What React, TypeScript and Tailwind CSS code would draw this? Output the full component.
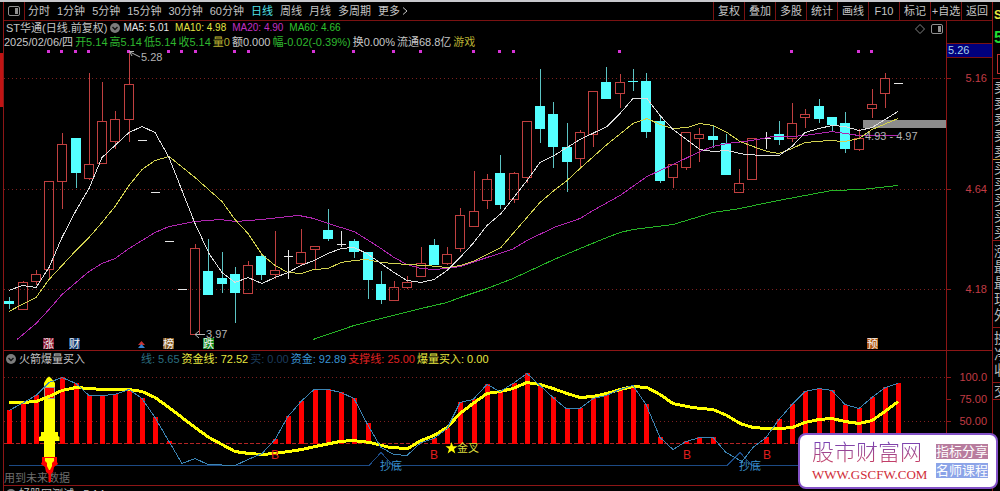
import { useState } from 'react';
import clsx from 'clsx';

type Kind = 'up' | 'down' | 'flat';
type Candle = [high: number, top: number, bottom: number, low: number, kind: Kind];
type Point = [number, number];

const periods = ['分时', '1分钟', '5分钟', '15分钟', '30分钟', '60分钟', '日线', '周线', '月线', '多周期'];
const tools = ['复权', '叠加', '多股', '统计', '画线', 'F10', '标记', '+自选', '返回'];

const averages = [
  { label: 'MA5: 5.01', color: 'text-[#e8e8e8]' },
  { label: 'MA10: 4.98', color: 'text-[#e4e444]' },
  { label: 'MA20: 4.90', color: 'text-[#c22fc2]' },
  { label: 'MA60: 4.66', color: 'text-[#2fc42f]' },
];

const quote = [
  { label: '2025/02/06/四', color: 'text-[#c8c8c8]' },
  { label: '开5.14', color: 'text-[#2fb82f]' },
  { label: '高5.14', color: 'text-[#2fb82f]' },
  { label: '低5.14', color: 'text-[#2fb82f]' },
  { label: '收5.14', color: 'text-[#2fb82f]' },
  { label: '量0', color: 'text-[#b8b032]' },
  { label: '额0.000', color: 'text-[#c8c8c8]' },
  { label: '幅-0.02(-0.39%)', color: 'text-[#2fb82f]' },
  { label: '换0.00%', color: 'text-[#c8c8c8]' },
  { label: '流通68.8亿', color: 'text-[#c8c8c8]' },
  { label: '游戏', color: 'text-[#b8b032]' },
];

const indicators = [
  { label: '线: 5.65', color: 'text-[#2b6f80]' },
  { label: '资金线: 72.52', color: 'text-[#e8e840]' },
  { label: '买: 0.00', color: 'text-[#1c3c5c]' },
  { label: '资金: 92.89', color: 'text-[#3a94d4]' },
  { label: '支撑线: 25.00', color: 'text-[#e02222]' },
  { label: '爆量买入: 0.00', color: 'text-[#e8e840]' },
];

const candles: Candle[] = [
  [297, 301, 304, 309, 'down'], [281, 282, 309, 309, 'up'], [270, 274, 281, 285, 'up'], [181, 181, 269, 278, 'up'],
  [133, 144, 181, 209, 'up'], [138, 138, 173, 188, 'down'], [73, 164, 178, 180, 'up'], [82, 121, 163, 163, 'up'],
  [111, 119, 141, 149, 'up'], [53, 84, 119, 142, 'up'], [140, 140, 140, 140, 'flat'], [192, 192, 192, 192, 'flat'],
  [241, 241, 241, 241, 'flat'], [289, 289, 289, 289, 'flat'], [244, 248, 334, 334, 'up'], [239, 271, 295, 295, 'down'],
  [252, 278, 284, 293, 'down'], [267, 274, 293, 323, 'down'], [261, 265, 293, 293, 'up'], [253, 256, 275, 280, 'down'],
  [231, 270, 274, 279, 'up'], [250, 256, 256, 279, 'flat'], [229, 252, 263, 266, 'up'], [246, 246, 249, 270, 'up'],
  [209, 230, 239, 241, 'down'], [231, 244, 244, 247, 'flat'], [239, 241, 252, 258, 'down'], [252, 252, 280, 299, 'down'],
  [271, 284, 300, 304, 'down'], [281, 287, 300, 300, 'up'], [276, 282, 287, 289, 'up'], [247, 263, 276, 276, 'up'],
  [239, 245, 265, 265, 'down'], [247, 254, 263, 265, 'up'], [208, 215, 248, 252, 'up'], [171, 211, 226, 226, 'up'],
  [174, 179, 200, 209, 'up'], [155, 173, 205, 209, 'down'], [172, 173, 199, 203, 'up'], [121, 121, 177, 183, 'up'],
  [69, 106, 129, 143, 'down'], [102, 114, 147, 168, 'down'], [123, 147, 162, 192, 'down'], [130, 132, 158, 167, 'up'],
  [91, 91, 134, 147, 'up'], [67, 82, 99, 99, 'down'], [74, 82, 93, 108, 'up'], [69, 81, 82, 91, 'down'],
  [73, 81, 132, 138, 'down'], [115, 121, 181, 183, 'down'], [164, 164, 177, 188, 'up'], [132, 132, 167, 170, 'up'],
  [128, 134, 138, 162, 'up'], [125, 136, 140, 148, 'down'], [134, 143, 175, 175, 'down'], [169, 183, 192, 193, 'up'],
  [138, 138, 179, 179, 'up'], [132, 138, 138, 149, 'flat'], [121, 134, 140, 145, 'down'], [103, 123, 138, 142, 'up'],
  [109, 114, 117, 128, 'up'], [99, 106, 119, 123, 'down'], [117, 117, 125, 131, 'down'], [112, 123, 149, 153, 'down'],
  [129, 138, 149, 151, 'up'], [89, 104, 108, 118, 'up'], [73, 78, 93, 108, 'up'], [83, 83, 83, 83, 'flat'],
];

const ma5: Point[] = [
  [9, 290], [22, 285], [36, 287], [49, 267], [62, 237], [76, 210], [89, 188], [102, 157], [115, 145], [129, 132],
  [142, 126], [155, 132], [169, 157], [195, 223], [209, 253], [222, 272], [235, 282], [248, 277], [262, 283], [275, 277],
  [288, 272], [301, 265], [314, 260], [328, 253], [341, 248], [354, 247], [367, 253], [381, 263], [394, 272], [407, 280],
  [421, 282], [434, 279], [447, 270], [460, 257], [473, 243], [487, 225], [501, 213], [513, 198], [527, 180], [540, 162],
  [554, 155], [580, 139], [607, 126], [620, 113], [633, 98], [647, 98], [660, 115], [673, 129], [700, 149], [713, 151],
  [727, 150], [745, 154], [765, 155], [779, 155], [792, 146], [805, 132], [819, 128], [832, 125], [845, 126], [859, 130],
  [872, 127], [885, 119], [898, 111],
];

const ma10: Point[] = [
  [9, 311], [22, 304], [36, 297], [49, 279], [62, 265], [76, 250], [89, 237], [102, 222], [115, 206], [129, 185],
  [142, 169], [155, 160], [169, 156], [195, 177], [222, 201], [235, 219], [248, 233], [262, 254], [275, 265], [288, 272],
  [301, 273], [314, 269], [328, 268], [341, 262], [354, 260], [367, 259], [381, 262], [407, 264], [427, 265], [447, 267],
  [460, 265], [473, 261], [501, 247], [513, 233], [540, 202], [554, 190], [567, 180], [580, 168], [607, 144], [633, 123],
  [647, 118], [660, 124], [673, 128], [687, 127], [700, 123], [713, 125], [727, 132], [740, 141], [753, 146], [767, 151],
  [779, 153], [792, 148], [805, 142], [829, 140], [845, 141], [859, 138], [872, 129], [898, 118],
];

const ma20: Point[] = [
  [17, 339], [36, 323], [49, 309], [62, 294], [76, 282], [89, 271], [102, 263], [115, 258], [129, 248], [142, 240],
  [155, 232], [169, 226], [195, 221], [220, 219], [236, 221], [262, 219], [288, 216], [299, 215], [314, 218], [328, 223],
  [354, 231], [367, 239], [381, 248], [394, 257], [407, 264], [421, 268], [434, 269], [447, 268], [460, 266], [487, 257],
  [512, 249], [527, 240], [554, 227], [580, 218], [593, 210], [620, 195], [647, 176], [660, 170], [673, 164], [700, 151],
  [713, 146], [727, 143], [745, 141], [757, 139], [773, 136], [792, 136], [805, 135], [819, 133], [832, 131], [845, 133],
  [859, 135], [898, 135],
];

const ma60: Point[] = [
  [313, 339], [354, 325], [381, 318], [421, 308], [447, 302], [460, 297], [487, 288], [513, 278], [554, 259], [580, 248],
  [607, 237], [620, 232], [633, 229], [673, 224], [713, 212], [740, 208], [773, 201], [805, 195], [832, 190], [862, 189],
  [898, 185],
];

const signalDots = [48, 61, 75, 88, 128, 168, 181, 195, 234, 248, 313, 353, 393, 420, 473, 499, 513, 619, 791, 858, 871];

const badges = [
  { x: 43, text: '涨', fill: '#86122c' },
  { x: 69, text: '财', fill: '#123c74' },
  { x: 163, text: '榜', fill: '#84561e' },
  { x: 203, text: '跌', fill: '#12861e' },
  { x: 867, text: '预', fill: '#b0560e' },
];

// bar tops by candle index, null where the line is under the support level
const barTops: (number | null)[] = [
  410, 403, 395, null, 377, 383, 395, 395, 394, 389, 398, 417, 441, null, null, null, null, null, null, null,
  439, 416, 401, 389, 389, 392, 398, 423, null, null, null, null, 438, 428, 402, 399, 384, 391, 383, 373,
  385, 397, 408, 408, 398, 395, 390, 387, 404, 437, null, 441, 437, 437, null, null, null, 437, 419, 404,
  391, 388, 390, 405, 408, 397, 387, 383,
];

const fundLine: Point[] = [
  [9, 410], [22, 403], [36, 395], [49, 382], [62, 377], [76, 383], [89, 395], [102, 395], [115, 394], [129, 389],
  [142, 398], [155, 417], [169, 441], [182, 463], [195, 458], [208, 464], [235, 465], [248, 459], [262, 453], [275, 439],
  [288, 416], [301, 401], [314, 389], [328, 389], [341, 392], [354, 398], [367, 423], [381, 447], [394, 454], [407, 455],
  [421, 442], [434, 438], [447, 428], [460, 402], [473, 399], [487, 384], [500, 391], [513, 383], [527, 373], [540, 385],
  [553, 397], [566, 408], [580, 408], [593, 398], [606, 395], [620, 389], [633, 385], [646, 404], [660, 437], [673, 449],
  [686, 441], [700, 437], [713, 437], [726, 452], [742, 461], [753, 447], [766, 437], [779, 419], [792, 404], [805, 391],
  [819, 388], [832, 390], [845, 404], [859, 408], [872, 397], [885, 387], [898, 383],
];

const capitalLine: Point[] = [
  [9, 402], [22, 402], [36, 401], [49, 396], [62, 390], [76, 387], [89, 388], [102, 389], [115, 389], [129, 389],
  [142, 391], [155, 397], [169, 407], [182, 417], [195, 427], [209, 437], [222, 444], [235, 451], [249, 453], [262, 454],
  [275, 453], [302, 449], [315, 446], [340, 441], [353, 440], [370, 442], [390, 447], [408, 448], [421, 440], [434, 435],
  [447, 427], [460, 413], [473, 403], [487, 393], [500, 391], [513, 388], [527, 382], [540, 384], [553, 388], [567, 393],
  [580, 397], [593, 396], [607, 393], [620, 389], [633, 386], [647, 387], [660, 394], [673, 403], [687, 406], [700, 408],
  [713, 409], [727, 415], [740, 423], [753, 427], [767, 428], [780, 428], [792, 427], [805, 422], [819, 419], [832, 418],
  [845, 421], [859, 423], [872, 420], [885, 411], [898, 401],
];

const toPoints = (points: Point[]) => points.map(([x, y]) => `${x},${y + 0.5}`).join(' ');
const candleX = (index: number) => Math.round(9.3 + 13.27 * index);

function CandleShape({ candle, index }: { candle: Candle; index: number }) {
  const [high, top, bottom, low, kind] = candle;
  const x = candleX(index);

  if (kind === 'flat') {
    return (
      <g fill="#e6e6e6">
        <rect x={x - 4} y={top} width={9} height={1} />
        {low > high && <rect x={x} y={high} width={1} height={low - high} />}
      </g>
    );
  }
  if (kind === 'down') {
    return (
      <g fill="#54ffff">
        <rect x={x} y={high} width={1} height={low - high} fill="#5cc4c4" />
        <rect x={x - 5} y={top} width={10} height={Math.max(bottom - top, 1)} />
      </g>
    );
  }
  return (
    <g fill="#c04040">
      <rect x={x} y={high} width={1} height={top - high} />
      <rect x={x} y={bottom} width={1} height={low - bottom} />
      <rect x={x - 4.5} y={top + 0.5} width={9} height={bottom - top} fill="none" stroke="#c04040" />
    </g>
  );
}

function PriceChart() {
  return (
    <svg className="block h-[301px] w-full text-[11px]" viewBox="4 49 942 301" preserveAspectRatio="xMinYMin meet">
      <g shapeRendering="crispEdges" fill="none">
        {[78, 189, 289].map((y) => (
          <line key={y} x1={4} x2={946} y1={y + 0.5} y2={y + 0.5} stroke="#7c2020" strokeDasharray="1 3" />
        ))}
        <rect x={863} y={120} width={83} height={8} fill="#8c8c8c" />
        {candles.map((candle, i) => (
          <CandleShape key={i} candle={candle} index={i} />
        ))}
        {signalDots.map((x) => (
          <rect key={x} x={x - 1} y={50} width={3} height={3} fill="#d633d6" />
        ))}
        <polyline points={toPoints(ma60)} stroke="#26b426" />
        <polyline points={toPoints(ma20)} stroke="#b026b0" />
        <polyline points={toPoints(ma10)} stroke="#d2d250" />
        <polyline points={toPoints(ma5)} stroke="#dedede" />
      </g>
      <g fill="none" stroke="#b4b4b4">
        <path d="M140 57L130 52M134 51.5L129.5 51.5L132 56" />
        <path d="M205 334.5H195M199 331L195 334.5L199 338" />
      </g>
      <g fill="#b4b4b4">
        <text x={141} y={61}>5.28</text>
        <text x={206} y={338}>3.97</text>
        <text x={865} y={140}>4.93 - 4.97</text>
      </g>
      {badges.map((badge) => (
        <g key={badge.text}>
          <rect x={badge.x} y={338} width={11} height={11} fill={badge.fill} />
          <text x={badge.x} y={348} fill="#f2f2f2">{badge.text}</text>
        </g>
      ))}
      <path d="M141.5 341L145 345H138Z" fill="#c83232" />
      <path d="M141.5 344L145 348H138Z" fill="#3282d2" />
    </svg>
  );
}

function Rocket() {
  return (
    <g>
      <path d="M44 387V383L47 378L49 376.500L51 378L55 383V387Z" fill="#ffff00" />
      <rect x={44} y={398} width={11} height={59} fill="#ffff00" />
      <rect x={44.500} y={387.500} width={10} height={11} fill="#ff0000" stroke="#a8a890" />
      <path d="M41 432H58V436L59.500 437V441H39V437L41 436Z" fill="#ffff00" />
      <path d="M42 457H57V462L58 464L54 467L53 472L51 474V482H48.500V474L46 472L45 467L41 464L42 462Z" fill="#ff0000" />
      <path d="M45 458H54V461L52 463V466L50 470H49L47 466V463L45 461Z" fill="#ffff00" />
    </g>
  );
}

function FundChart() {
  return (
    <svg className="block h-[118px] w-full text-[11px]" viewBox="4 367 942 118" preserveAspectRatio="xMinYMin meet">
      <g shapeRendering="crispEdges" fill="none">
        <line x1={4} x2={946} y1={377.5} y2={377.5} stroke="#7c2020" strokeDasharray="1 3" />
        <line x1={4} x2={946} y1={421.5} y2={421.5} stroke="#7c2020" strokeDasharray="1 3" />
        <line x1={4} x2={946} y1={443.5} y2={443.5} stroke="#b42424" strokeDasharray="4 2" />
        <polyline points="9,465.5 369,465.5 381,452.5 393,465.5 727,465.5 740,452.5 752,465.5 898,465.5" stroke="#1c4a84" />
        {barTops.map((top, i) =>
          top === null ? null : (
            <rect key={i} x={candleX(i) - 2} y={top} width={5} height={444 - top} fill="#ff0000" />
          ),
        )}
      </g>
      <text x={4} y={482} fill="#6e6e6e">用到未来数据</text>
      <Rocket />
      <g shapeRendering="crispEdges" fill="none">
        <polyline points={toPoints(capitalLine)} stroke="#ffff00" strokeWidth={3} />
        <polyline points={toPoints(fundLine)} stroke="#3c84b4" />
      </g>
      <g fill="#e01e1e" textAnchor="middle" className="text-xs">
        {[275, 434, 687, 767].map((x) => (
          <text key={x} x={x} y={459}>B</text>
        ))}
      </g>
      <g fill="#3a90d0">
        <text x={380} y={470}>抄底</text>
        <text x={739} y={470}>抄底</text>
      </g>
      <path d="M451.500 442L453 446.300H457.500L454 449L455.300 453.500L451.500 450.800L447.700 453.500L449 449L445.500 446.300H450Z" fill="#ffff00" />
      <text x={457} y={452} fill="#dcdc3c">金叉</text>
    </svg>
  );
}

function ChevronBadge() {
  return (
    <svg className="size-2.5 shrink-0" viewBox="0 0 10 10" aria-hidden="true">
      <circle cx="5" cy="5" r="5" fill="#7c7c7c" />
      <path d="M2.500 4L5 6.500L7.500 4" fill="none" stroke="#141414" strokeWidth="1.400" />
    </svg>
  );
}

function PanelIcon() {
  return (
    <svg className="h-2.5 w-3" viewBox="0 0 12 10" aria-hidden="true">
      <rect x="0.500" y="0.500" width="11" height="9" rx="1.500" fill="none" stroke="#909090" />
      <rect x="7" y="2" width="3" height="6" fill="#909090" />
    </svg>
  );
}

function Toolbar() {
  const [active, setActive] = useState('日线');

  return (
    <nav className="flex h-[19px] items-stretch justify-between border-b border-[#7a1212] text-[#c4c4c4]">
      <div className="flex items-center">
        <button type="button" aria-label="面板" className="flex h-full w-[21px] items-center justify-center border-r border-[#7a1212]">
          <PanelIcon />
        </button>
        <div className="flex items-center gap-[7px] pl-[3px]">
          {periods.map((period) => (
            <button
              key={period}
              type="button"
              onClick={() => setActive(period)}
              className={clsx('whitespace-nowrap', period === active && 'text-[#4fe0e8]')}
            >
              {period}
            </button>
          ))}
          <button type="button" className="flex items-center gap-0.5 whitespace-nowrap">
            更多
            <svg className="h-2 w-1.5" viewBox="0 0 6 8" aria-hidden="true">
              <path d="M1 0.500L5 4L1 7.500" fill="none" stroke="currentColor" />
            </svg>
          </button>
        </div>
      </div>
      <div className="flex">
        {tools.map((tool) => (
          <button key={tool} type="button" className="w-[31px] whitespace-nowrap border-l border-[#7a1212] text-center">
            {tool}
          </button>
        ))}
      </div>
    </nav>
  );
}

function PriceAxis() {
  return (
    <div className="w-[46px] shrink-0 border-l border-[#8c1616] pt-[22px]">
      <div className="h-[15px] border-y border-[#7a1212] bg-[#00007c] pl-px leading-[13px] text-[#a8d4e8]">5.26</div>
      <svg className="block h-[292px] w-[45px]" viewBox="947 58 45 292">
        {[
          { y: 78, label: '5.16' },
          { y: 189, label: '4.64' },
          { y: 289, label: '4.18' },
        ].map((tick) => (
          <g key={tick.label}>
            <rect x={947} y={tick.y} width={4} height={1} fill="#8c1616" />
            <text x={987} y={tick.y + 4} textAnchor="end" fill="#c03c44">{tick.label}</text>
          </g>
        ))}
      </svg>
    </div>
  );
}

function FundAxis() {
  return (
    <div className="w-[46px] shrink-0 border-l border-[#8c1616]">
      <svg className="block h-[134px] w-[45px]" viewBox="947 351 45 134">
        {[
          { y: 377, label: '100.0' },
          { y: 399, label: '75.00' },
          { y: 421, label: '50.00' },
        ].map((tick) => (
          <g key={tick.label}>
            <rect x={947} y={tick.y} width={4} height={1} fill="#8c1616" />
            <text x={987} y={tick.y + 4} textAnchor="end" fill="#c03c44">{tick.label}</text>
          </g>
        ))}
      </svg>
    </div>
  );
}

function OrderBook() {
  return (
    <aside className="w-2 shrink-0 overflow-hidden whitespace-nowrap border-l border-[#8c1616] text-sm leading-4 text-[#b8b8b8]">
      <p className="mt-1 pl-px text-xs font-bold leading-[18px] text-[#e8e840]">S</p>
      <p className="pl-px text-base font-bold leading-7 text-[#22dc32]">5</p>
      <div className="ml-1 mt-0.5 h-5 w-5 border border-[#c03030]" />
      <div className="mt-1 border-t border-[#8c1616] pl-px">
        {Array.from({ length: 5 }).map((_, i) => (
          <p key={i}>卖</p>
        ))}
      </div>
      <div className="border-t border-[#b89032] pl-px">
        {Array.from({ length: 5 }).map((_, i) => (
          <p key={i}>买</p>
        ))}
      </div>
      <div className="border-t border-[#8c1616] pb-1 pl-px pt-0.5">
        {['涨', '最', '最', '现', '外'].map((name, i) => (
          <p key={i}>{name}</p>
        ))}
      </div>
      <div className="border-t border-[#8c1616] pb-1 pl-px pt-0.5">
        {['换', '净', '收'].map((name) => (
          <p key={name}>{name}</p>
        ))}
      </div>
      <p className="border-y border-[#8c1616] pl-px">交</p>
    </aside>
  );
}

function SiteCard() {
  return (
    <a
      href="#"
      className="absolute bottom-0.5 right-0.5 flex h-14 w-[200px] items-center justify-between rounded-lg border-2 border-[#8452c8] bg-white px-2 pl-3"
    >
      <span className="flex flex-col">
        <span className="bg-gradient-to-b from-[#6c3cc0] to-[#d8324c] bg-clip-text text-[22px] font-light leading-7 text-transparent">
          股市财富网
        </span>
        <span className="font-['Liberation_Serif',serif] text-[13px] leading-4 text-[#d02c38]">WWW.GSCFW.COM</span>
      </span>
      <span className="flex flex-col gap-1 text-[13px] leading-[15px] text-white">
        <span className="bg-[#b87c9e]">指标分享</span>
        <span className="bg-[#8ca4e8]">名师课程</span>
      </span>
    </a>
  );
}

export default function App() {
  return (
    <div className="relative flex h-screen flex-col overflow-hidden bg-black font-['Liberation_Sans','Noto_Sans_CJK_SC',sans-serif] text-[11px] leading-[14px]">
      <div className="h-0.5 shrink-0 bg-[#c8c8cc]" />
      <div className="flex min-h-0 flex-1">
        <div className="w-1 shrink-0 border-r border-[#8c1616] pt-[51px]">
          <div className="h-[54px] bg-[#c01414]" />
        </div>

        <main className="min-w-0 flex-1">
          <Toolbar />

          <section className="flex border-b border-[#8c1616]">
            <div className="min-w-0 flex-1">
              <header className="flex h-3.5 items-center justify-between pl-0.5 pr-[3px]">
                <div className="flex items-center gap-[3px] whitespace-nowrap">
                  <h1 className="text-[#c4c4c4]">ST华通(日线.前复权)</h1>
                  <ChevronBadge />
                  <div className="flex gap-1.5 text-[10px]">
                    {averages.map((item) => (
                      <span key={item.label} className={item.color}>{item.label}</span>
                    ))}
                  </div>
                </div>
                <div className="flex items-center gap-1.5 pt-0.5">
                  <svg className="size-2.5" viewBox="0 0 10 10" aria-hidden="true">
                    <path d="M5 0.500L9.500 5L5 9.500L0.500 5Z" fill="none" stroke="#808080" />
                  </svg>
                  <PanelIcon />
                </div>
              </header>
              <div className="flex h-3.5 gap-0.5 whitespace-nowrap">
                {quote.map((item) => (
                  <span key={item.label} className={item.color}>{item.label}</span>
                ))}
              </div>
              <PriceChart />
            </div>
            <PriceAxis />
          </section>

          <section className="flex border-b border-[#8c1616]">
            <div className="min-w-0 flex-1">
              <header className="flex h-4 items-center whitespace-nowrap pl-0.5">
                <ChevronBadge />
                <h2 className="ml-[3px] mr-14 text-[#c4c4c4]">火箭爆量买入</h2>
                <div className="flex gap-0.5">
                  {indicators.map((item) => (
                    <span key={item.label} className={item.color}>{item.label}</span>
                  ))}
                </div>
              </header>
              <FundChart />
            </div>
            <FundAxis />
          </section>

          <section className="flex h-4 items-center gap-[3px] whitespace-nowrap pl-0.5 text-[#c4c4c4]">
            <ChevronBadge />
            <h2>好股网测试 : 5.14</h2>
          </section>
        </main>

        <OrderBook />
      </div>
      <SiteCard />
    </div>
  );
}
